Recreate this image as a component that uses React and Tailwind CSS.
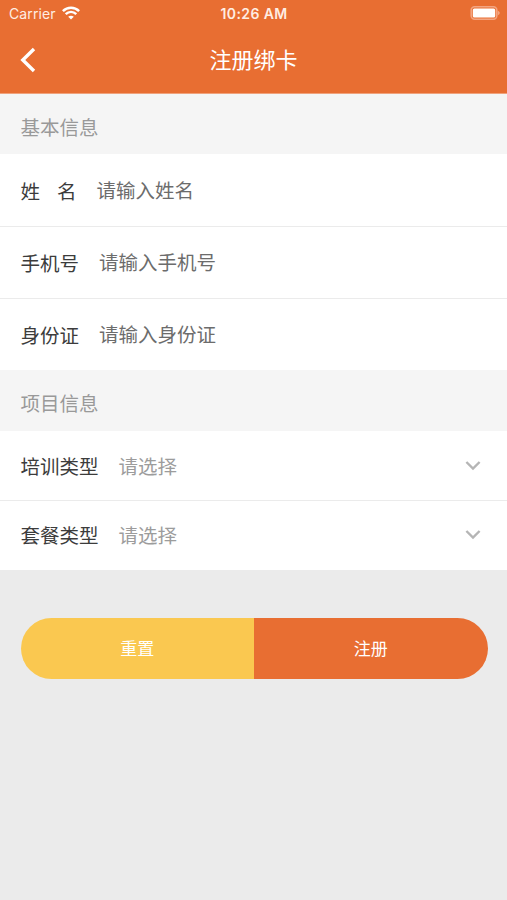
const inputRows = [
  { label: ['姓', '名'], hint: '请输入姓名' },
  { label: ['手机号'], hint: '请输入手机号' },
  { label: ['身份证'], hint: '请输入身份证' },
]

const selectRows = [
  { label: '培训类型', hint: '请选择' },
  { label: '套餐类型', hint: '请选择' },
]

function StatusBar() {
  return (
    <div className="grid h-[27px] grid-cols-3 items-center pr-[6px] pl-[9px] font-['Inter','Liberation_Sans',sans-serif] text-[14px] leading-none text-[#ffede3]">
      <div className="flex items-center gap-[6px]">
        <span className="tracking-[0.1px]">Carrier</span>
        <svg className="-mt-px" width="18" height="14" viewBox="0 0 18 14" fill="none" stroke="#fff" strokeWidth="2.5">
          <path d="M0.9 5.1C5.5 0.6 12.5 0.6 17.1 5.1" />
          <path d="M3.7 8.1C6.8 5.2 11.2 5.2 14.3 8.1" />
          <path d="M9 13.6L6.2 10.7C7.8 9.3 10.2 9.3 11.8 10.7Z" fill="#fff" stroke="none" />
        </svg>
      </div>
      <span className="pt-px pr-[2px] text-center text-[14px] font-semibold tracking-[0.4px] whitespace-nowrap">10:26 AM</span>
      <svg className="-mt-px justify-self-end" width="31" height="14" viewBox="0 0 31 14">
        <rect x="1.2" y="0.8" width="25.6" height="12.4" rx="3.4" fill="none" stroke="#f3a582" strokeWidth="1.6" />
        <rect x="2.8" y="2.4" width="22.4" height="9.2" rx="1.6" fill="#fff" />
        <path d="M27.8 4.8C30.4 5.6 30.4 8.4 27.8 9.2Z" fill="#f3a582" />
      </svg>
    </div>
  )
}

function SectionTitle({ children }) {
  return <h2 className="flex h-[61px] items-center bg-[#f5f5f5] px-[20.5px] pt-[4px] text-[#999]">{children}</h2>
}

function ChevronDown() {
  return (
    <svg className="mt-px ml-auto" width="16" height="12" viewBox="0 0 16 12" fill="none" stroke="#b5b5b5" strokeWidth="2.4">
      <path d="M1.4 2L8 8.6L14.6 2" />
    </svg>
  )
}

export default function App() {
  return (
    <div className="flex min-h-screen w-full flex-col bg-[#ebebeb] font-['Noto_Sans_CJK_SC',sans-serif] text-[19.5px] leading-none text-[#3c3c3c]">
      <header className="h-[94px] border-b border-[#f0a27c] bg-[#e86e32] text-white">
        <StatusBar />
        <div className="grid h-[66px] grid-cols-3 items-center px-[20px]">
          <svg width="16" height="26" viewBox="0 0 16 26" fill="none" stroke="currentColor" strokeWidth="3.4">
            <path d="M14 2L2.8 13L14 24" />
          </svg>
          <h1 className="pb-[4px] text-center text-[22px]">注册绑卡</h1>
        </div>
      </header>

      <SectionTitle>基本信息</SectionTitle>
      <div className="-mt-px bg-white">
        {inputRows.map((row) => (
          <div key={row.hint} className="flex h-[72px] items-center gap-[20px] border-t border-[#ebebeb] px-[20.5px] first:border-transparent">
            <div className="flex gap-[17px]">
              {row.label.map((part) => (
                <span key={part}>{part}</span>
              ))}
            </div>
            <span className="pb-[2px] text-[#6c6c6c]">{row.hint}</span>
          </div>
        ))}
      </div>

      <SectionTitle>项目信息</SectionTitle>
      <div className="bg-white">
        {selectRows.map((row) => (
          <div key={row.label} className="flex h-[69.5px] items-center gap-[20px] border-t border-[#ebebeb] pr-[26px] pb-px pl-[20.5px] first:h-[69px] first:border-transparent">
            <span>{row.label}</span>
            <span className="text-[#9c9c9c]">{row.hint}</span>
            <ChevronDown />
          </div>
        ))}
      </div>

      <div className="mr-[19.5px] ml-[20.5px] mt-[48.5px] flex h-[61px] overflow-hidden rounded-full text-[17px] text-white">
        <button className="flex-1 bg-[#fac850] pb-[2px]">重置</button>
        <button className="flex-1 bg-[#e86e32] pb-[2px]">注册</button>
      </div>
    </div>
  )
}
